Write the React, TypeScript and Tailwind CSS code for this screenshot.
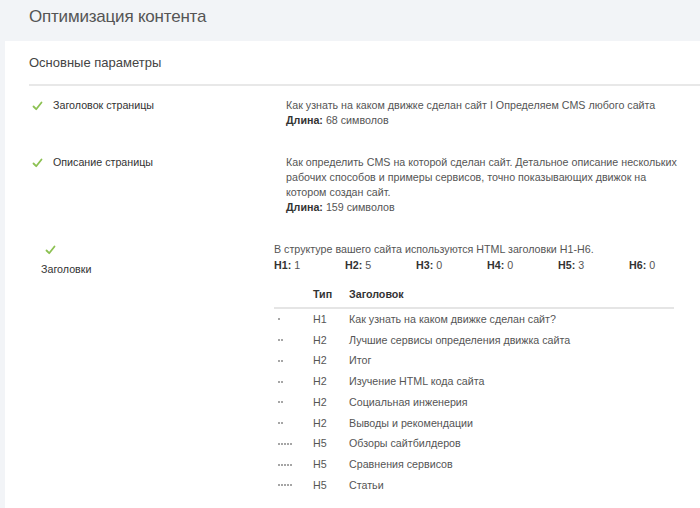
import React from "react";

const Check = () => (
  <svg width="11" height="10" viewBox="0 0 11 10" className="shrink-0">
    <path d="M1.5 5.5 L4.2 8.2 L9.5 1.5" fill="none" stroke="#8cc152" strokeWidth="1.8" strokeLinecap="round" strokeLinejoin="round" />
  </svg>
);

const Dots = ({ n }: { n: number }) => (
  <div className="flex items-center gap-[1px]">
    {Array.from({ length: n }).map((_, i) => (
      <div key={i} className="w-[2px] h-[2px] rounded-full bg-[#888]" />
    ))}
  </div>
);

const headings: [number, string, string][] = [
  [1, "H1", "Как узнать на каком движке сделан сайт?"],
  [2, "H2", "Лучшие сервисы определения движка сайта"],
  [2, "H2", "Итог"],
  [2, "H2", "Изучение HTML кода сайта"],
  [2, "H2", "Социальная инженерия"],
  [2, "H2", "Выводы и рекомендации"],
  [5, "H5", "Обзоры сайтбилдеров"],
  [5, "H5", "Сравнения сервисов"],
  [5, "H5", "Статьи"],
];

const counts: [string, string][] = [
  ["H1:", "1"],
  ["H2:", "5"],
  ["H3:", "0"],
  ["H4:", "0"],
  ["H5:", "3"],
  ["H6:", "0"],
];

export default function App() {
  return (
    <div
      className="w-[700px] h-[508px] overflow-hidden bg-[#f2f4f7] text-[#555]"
      style={{ fontFamily: '"Liberation Sans", Arial, sans-serif' }}
    >
      <div className="h-[41px] flex items-center pl-[29px] pb-[8px]">
        <h1 className="text-[17px] text-[#555] tracking-[-0.2px]">Оптимизация контента</h1>
      </div>
      <div className="ml-[5px] bg-white h-[467px] w-[720px]">
        <div className="h-[43px] flex items-center pl-[24px]">
          <h2 className="text-[13px] text-[#444]">Основные параметры</h2>
        </div>
        <div className="ml-[24px] h-[2px] bg-[#e8e8e8]" />

        {/* Row 1 */}
        <div className="flex text-[10.7px] leading-[15px] pt-[12px]">
          <div className="w-[281px] flex items-start pl-[27px] gap-[10px]">
            <div className="pt-[3px]"><Check /></div>
            <span className="text-[#333]">Заголовок страницы</span>
          </div>
          <div className="w-[395px] text-[#555]">
            <div>Как узнать на каком движке сделан сайт I Определяем CMS любого сайта</div>
            <div><b className="text-[#333]">Длина:</b> 68 символов</div>
          </div>
        </div>

        {/* Row 2 */}
        <div className="flex text-[10.7px] leading-[15px] pt-[27px]">
          <div className="w-[281px] flex items-start pl-[27px] gap-[10px]">
            <div className="pt-[3px]"><Check /></div>
            <span className="text-[#333]">Описание страницы</span>
          </div>
          <div className="w-[395px] text-[#555]">
            <div>
              Как определить CMS на которой сделан сайт. Детальное описание нескольких рабочих способов и примеры сервисов, точно показывающих движок на котором создан сайт.
            </div>
            <div><b className="text-[#333]">Длина:</b> 159 символов</div>
          </div>
        </div>

        {/* Row 3 */}
        <div className="flex text-[10.7px] leading-[15px] pt-[27px]">
          <div className="w-[269px] flex flex-col items-start pl-[36px]">
            <div className="pl-[4px] pt-[3px]"><Check /></div>
            <span className="text-[#333] mt-[7px]">Заголовки</span>
          </div>
          <div className="w-[400px] text-[#555]">
            <div>В структуре вашего сайта используются HTML заголовки H1-H6.</div>
            <div className="flex w-[430px] mt-[1px]">
              {counts.map(([k, v]) => (
                <div key={k} className="w-[71px]">
                  <b className="text-[#333]">{k}</b> {v}
                </div>
              ))}
            </div>
            <div className="mt-[11px]">
              <div className="flex h-[20px] items-center font-bold text-[#333]">
                <div className="w-[39px]" />
                <div className="w-[36px]">Тип</div>
                <div>Заголовок</div>
              </div>
              <div className="h-[2px] bg-[#e5e5e5] mt-[3px]" />
              <div>
                {headings.map(([n, t, title], i) => (
                  <div key={i} className="flex h-[20.75px] items-center">
                    <div className="w-[39px] pl-[4px]"><Dots n={n} /></div>
                    <div className="w-[36px]">{t}</div>
                    <div>{title}</div>
                  </div>
                ))}
              </div>
            </div>
          </div>
        </div>
      </div>
    </div>
  );
}
